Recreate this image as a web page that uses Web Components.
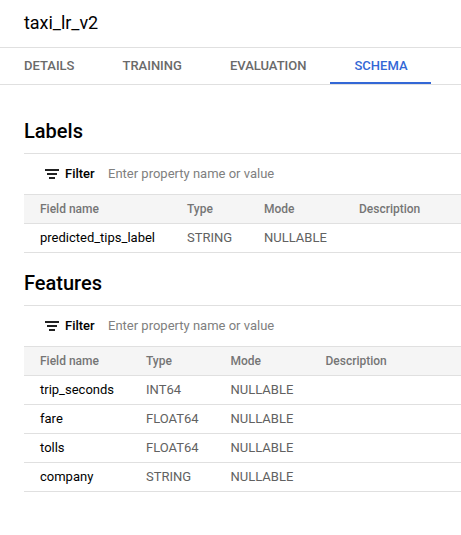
<!DOCTYPE html>
<html lang="en">
<head>
<meta charset="utf-8">
<title>taxi_lr_v2</title>
<style>
body { margin: 0; background: #fff; font-family: Roboto, sans-serif; color: #000; overflow: hidden; }
</style>
</head>
<body>
<model-page></model-page>
<script>
const define = (name, html, setup) => customElements.define(name, class extends HTMLElement {
  constructor() {
    super();
    this.attachShadow({ mode: 'open' }).innerHTML = html;
  }
  connectedCallback() { if (setup) setup(this, this.shadowRoot); }
});

define('page-title', `
  <style>
    :host { display: block; box-sizing: border-box; height: 48px; padding-left: 24px; border-bottom: 1px solid #e0e0e0; font-size: 18px; letter-spacing: -0.04px; line-height: 46px; }
  </style><slot></slot>`);

define('tab-item', `
  <style>
    :host { display: block; box-sizing: border-box; height: 36px; padding: 0 24px; font-size: 13px; font-weight: 500; line-height: 36px; color: #6a6a6a; white-space: nowrap; }
    :host([active]) { width: 101px; color: #3367d6; border-bottom: 2px solid #3367d6; }
  </style><slot></slot>`);

define('tab-bar', `
  <style>
    :host { display: flex; box-sizing: border-box; height: 37px; border-bottom: 1px solid #e0e0e0; }
  </style><slot></slot>`);

define('filter-bar', `
  <style>
    :host { display: flex; align-items: center; box-sizing: border-box; height: 40px; padding-left: 21px; font-size: 13px; line-height: 16px; }
    svg { width: 14px; height: 10px; margin-right: 6px; }
    b { font-weight: 500; width: 43px; }
    span { color: #808080; white-space: nowrap; }
  </style>
  <svg viewBox="0 0 14 10"><path fill="#212121" d="M0 0h14v2H0zM2 4h10v2H2zM4 8h6v2H4z"/></svg>
  <b>Filter</b><span>Enter property name or value</span>`);

define('schema-row', `
  <style>
    :host { display: grid; grid-template-columns: var(--cols); box-sizing: border-box; height: 29px; padding-left: 16px; border-bottom: 1px solid #e0e0e0; font-size: 13px; line-height: 28px; color: #616161; white-space: nowrap; }
    :host([head]) { height: 30px; border-top: 1px solid #e0e0e0; background: #f5f5f5; font-size: 12px; font-weight: 500; color: #757575; }
    :host(:not([head])) span:first-of-type { color: #000; }
  </style>`, (el, root) => {
    for (const value of el.getAttribute('cells').split('|')) {
      const cell = document.createElement('span');
      cell.textContent = value;
      root.append(cell);
    }
  });

define('schema-section', `
  <style>
    :host { display: block; margin-left: 24px; }
    h2 { box-sizing: border-box; margin: 0; height: var(--heading, 53px); padding-top: var(--top, 15px); border-bottom: 1px solid #e0e0e0; font-size: 20px; font-weight: 500; line-height: 30px; }
  </style>
  <h2><slot name="heading"></slot></h2>
  <filter-bar></filter-bar>
  <slot></slot>`);

define('model-page', `
  <style>
    :host { display: block; height: 535px; }
    .labels { --heading: 69px; --top: 31px; --cols: 147px 77px 95px 1fr; }
    .features { --cols: 106px 84.5px 95px 1fr; }
  </style>
  <page-title>taxi_lr_v2</page-title>
  <tab-bar>
    <tab-item>DETAILS</tab-item>
    <tab-item>TRAINING</tab-item>
    <tab-item>EVALUATION</tab-item>
    <tab-item active>SCHEMA</tab-item>
  </tab-bar>
  <schema-section class="labels">
    <span slot="heading">Labels</span>
    <schema-row head cells="Field name|Type|Mode|Description"></schema-row>
    <schema-row cells="predicted_tips_label|STRING|NULLABLE|"></schema-row>
  </schema-section>
  <schema-section class="features">
    <span slot="heading">Features</span>
    <schema-row head cells="Field name|Type|Mode|Description"></schema-row>
    <schema-row cells="trip_seconds|INT64|NULLABLE|"></schema-row>
    <schema-row cells="fare|FLOAT64|NULLABLE|"></schema-row>
    <schema-row cells="tolls|FLOAT64|NULLABLE|"></schema-row>
    <schema-row cells="company|STRING|NULLABLE|"></schema-row>
  </schema-section>`);
</script>
</body>
</html>
